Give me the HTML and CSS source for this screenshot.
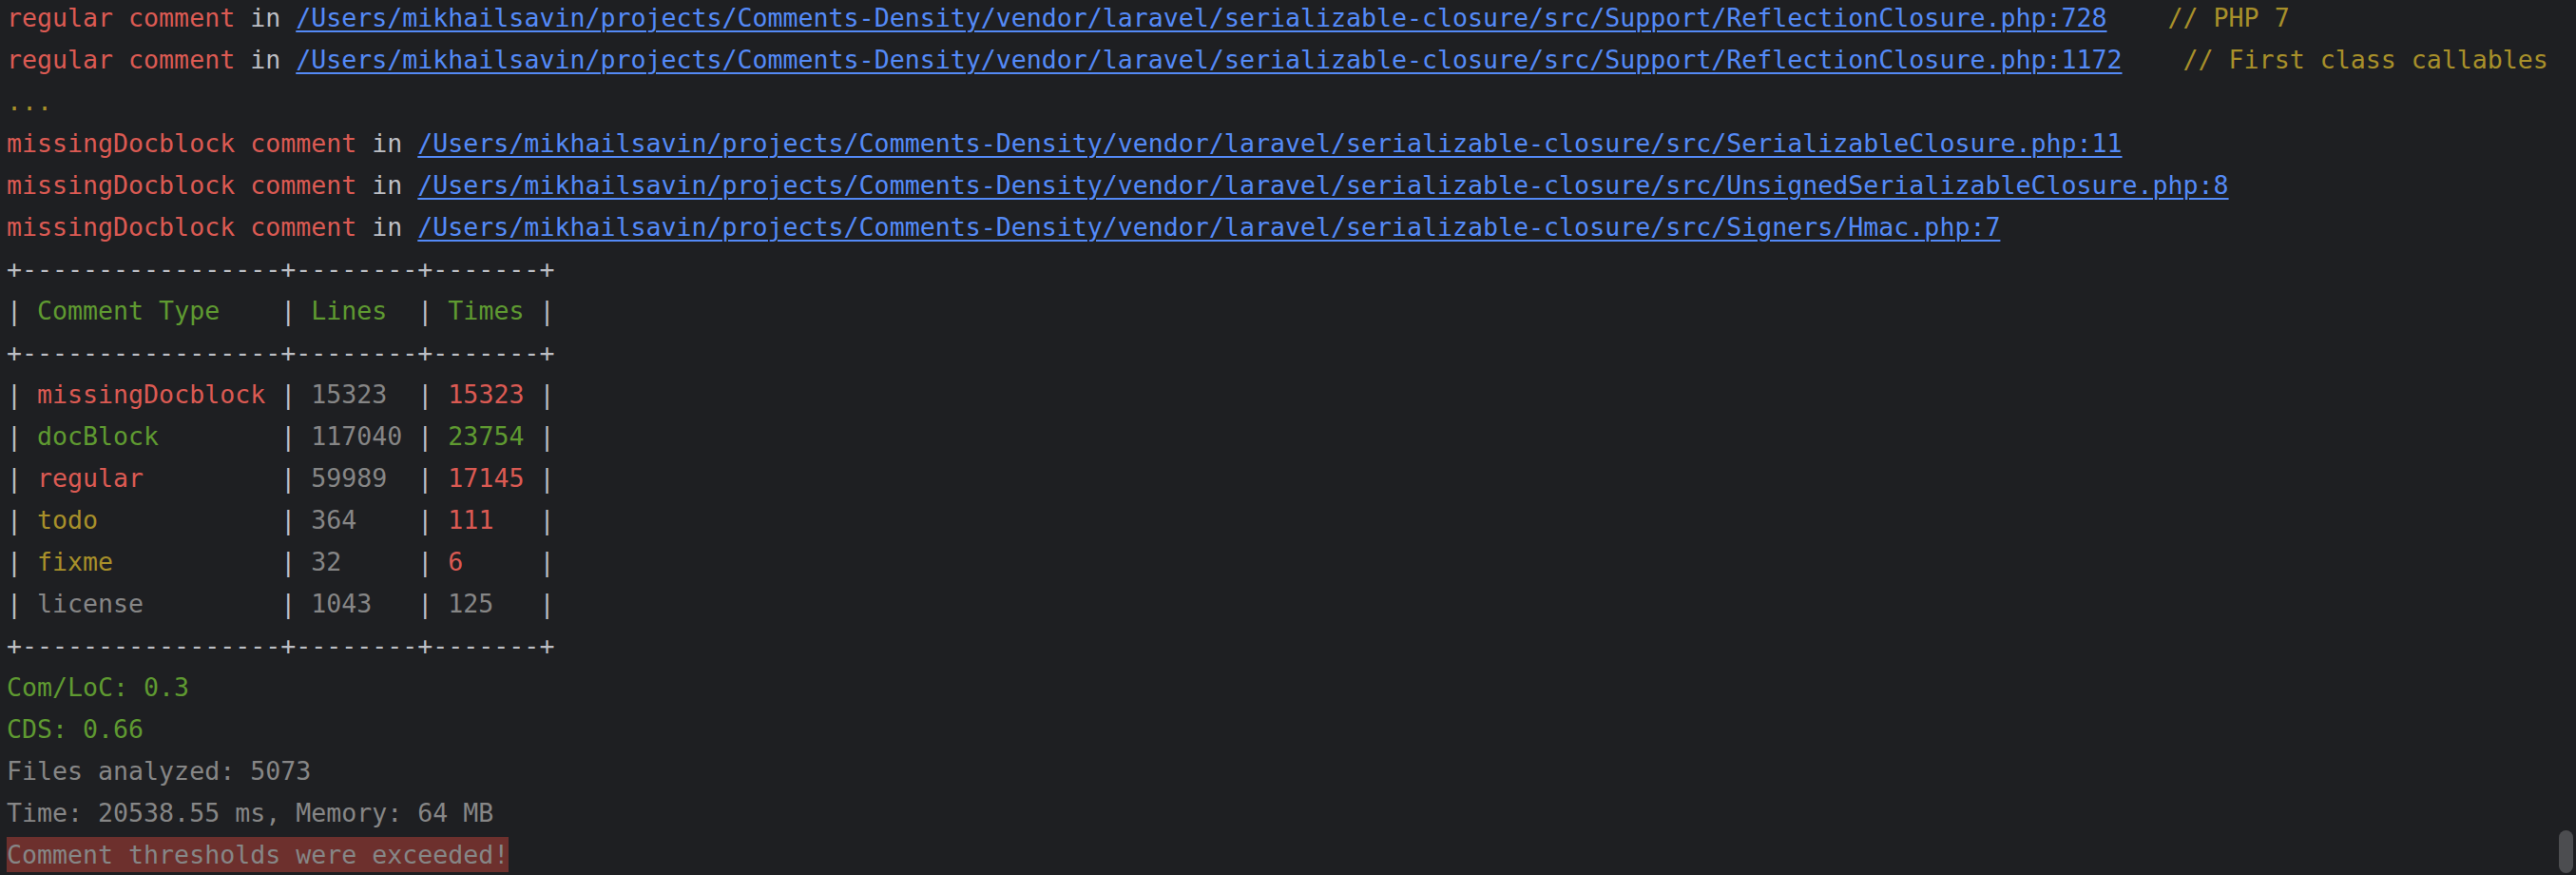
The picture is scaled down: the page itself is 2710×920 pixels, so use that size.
FILE: index.html
```html
<!DOCTYPE html>
<html lang="en">
<head>
    <meta charset="UTF-8">
    <meta name="viewport" content="width=device-width, initial-scale=1.0">
    <title>Comments Density</title>
    <link rel="stylesheet" href="styles.css">
</head>
<body>

    <div class="console">
        <div class="line"><span class="red">regular comment</span> in <a class="link" href="#">/Users/mikhailsavin/projects/Comments-Density/vendor/laravel/serializable-closure/src/Support/ReflectionClosure.php:728</a>    <span class="yellow">// PHP 7</span></div>
        <div class="line"><span class="red">regular comment</span> in <a class="link" href="#">/Users/mikhailsavin/projects/Comments-Density/vendor/laravel/serializable-closure/src/Support/ReflectionClosure.php:1172</a>    <span class="yellow">// First class callables</span></div>
        <div class="line"><span class="yellow">...</span></div>
        <div class="line"><span class="red">missingDocblock comment</span> in <a class="link" href="#">/Users/mikhailsavin/projects/Comments-Density/vendor/laravel/serializable-closure/src/SerializableClosure.php:11</a></div>
        <div class="line"><span class="red">missingDocblock comment</span> in <a class="link" href="#">/Users/mikhailsavin/projects/Comments-Density/vendor/laravel/serializable-closure/src/UnsignedSerializableClosure.php:8</a></div>
        <div class="line"><span class="red">missingDocblock comment</span> in <a class="link" href="#">/Users/mikhailsavin/projects/Comments-Density/vendor/laravel/serializable-closure/src/Signers/Hmac.php:7</a></div>

        <!-- summary table -->
        <div class="line">+-----------------+--------+-------+</div>
        <div class="line">| <span class="green">Comment Type</span>    | <span class="green">Lines</span>  | <span class="green">Times</span> |</div>
        <div class="line">+-----------------+--------+-------+</div>
        <div class="line">| <span class="red">missingDocblock</span> | <span class="gray">15323</span>  | <span class="red">15323</span> |</div>
        <div class="line">| <span class="green">docBlock</span>        | <span class="gray">117040</span> | <span class="green">23754</span> |</div>
        <div class="line">| <span class="red">regular</span>         | <span class="gray">59989</span>  | <span class="red">17145</span> |</div>
        <div class="line">| <span class="yellow">todo</span>            | <span class="gray">364</span>    | <span class="red">111</span>   |</div>
        <div class="line">| <span class="yellow">fixme</span>           | <span class="gray">32</span>     | <span class="red">6</span>     |</div>
        <div class="line">| <span class="gray">license</span>         | <span class="gray">1043</span>   | <span class="gray">125</span>   |</div>
        <div class="line">+-----------------+--------+-------+</div>

        <div class="line green">Com/LoC: 0.3</div>
        <div class="line green">CDS: 0.66</div>
        <div class="line gray">Files analyzed: 5073</div>
        <div class="line gray">Time: 20538.55 ms, Memory: 64 MB</div>
        <div class="line"><span class="error">Comment thresholds were exceeded!</span></div>
    </div>

    <div class="scroll-thumb"></div>

</body>
</html>
```

FILE: styles.css
```css
html, body {
    margin: 0;
    height: 100%;
    overflow: hidden;
}

body {
    background-color: #1e1f22;
    color: #bcbec4;
    font-family: "DejaVu Sans Mono", "Liberation Mono", monospace;
    font-size: 26.6px;
    position: relative;
}

.console {
    margin-top: -3px;
    padding-left: 7px;
}

.line {
    white-space: pre;
    line-height: 44px;
    height: 44px;
}

.red {
    color: #db5a53;
}

.green {
    color: #5f9a31;
}

.yellow {
    color: #a8902a;
}

.gray {
    color: #868686;
}

.link {
    color: #548af7;
    text-decoration: underline;
    text-decoration-thickness: 2px;
    text-underline-offset: 4px;
}

.error {
    background-color: #6d302d;
    color: #868686;
    padding: 3px 0;
}

.scroll-thumb {
    position: absolute;
    right: 3px;
    bottom: 2px;
    width: 15px;
    height: 45px;
    border-radius: 8px;
    background-color: #4c4d50;
}
```
